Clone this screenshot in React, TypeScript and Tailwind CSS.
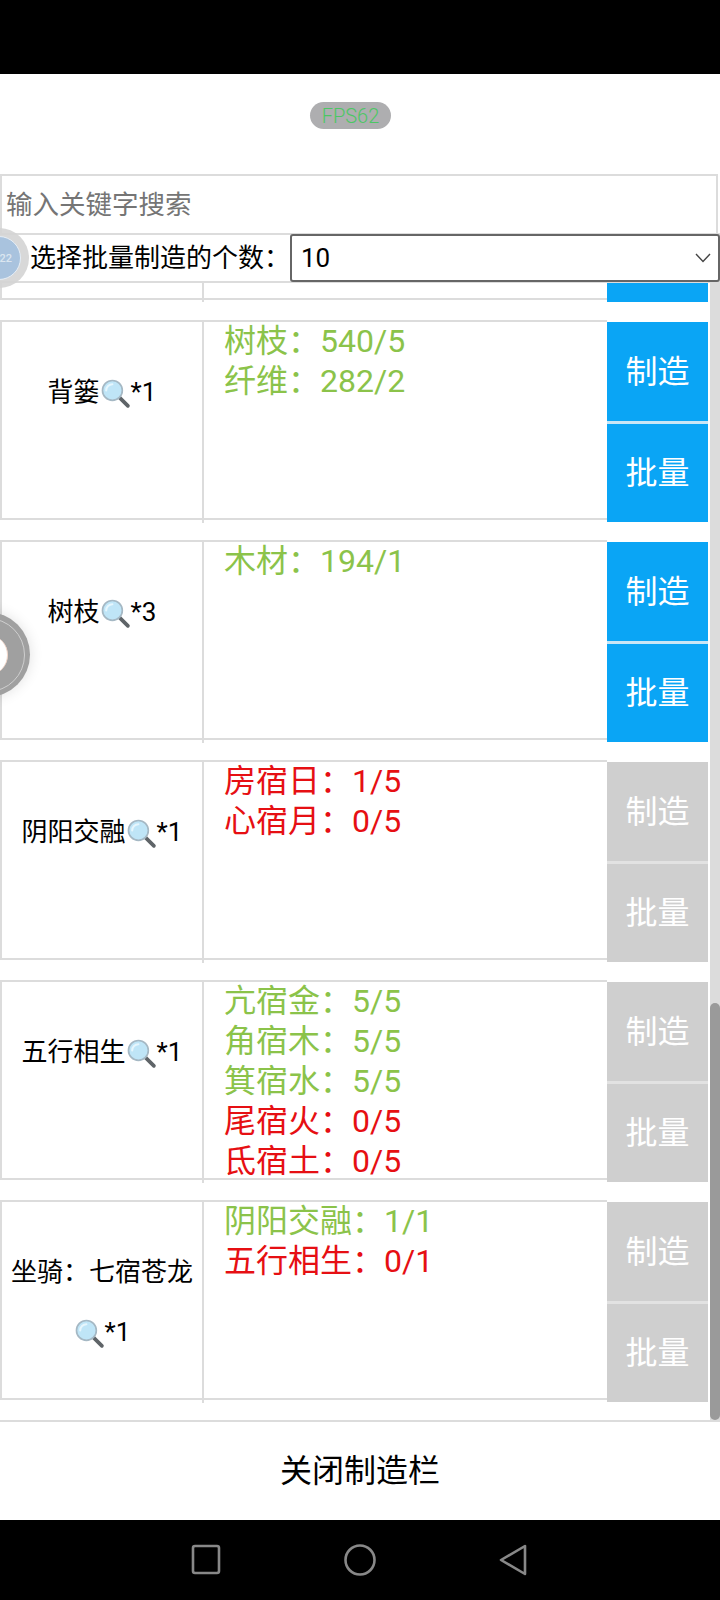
import React from "react";

type Need = { text: string; ok: boolean };

type Recipe = {
  name: string;
  suffix: string;
  needs: Need[];
  ready: boolean;
};

const recipes: Recipe[] = [
  {
    name: "背篓",
    suffix: "*1",
    ready: true,
    needs: [
      { text: "树枝：540/5", ok: true },
      { text: "纤维：282/2", ok: true },
    ],
  },
  {
    name: "树枝",
    suffix: "*3",
    ready: true,
    needs: [{ text: "木材：194/1", ok: true }],
  },
  {
    name: "阴阳交融",
    suffix: "*1",
    ready: false,
    needs: [
      { text: "房宿日：1/5", ok: false },
      { text: "心宿月：0/5", ok: false },
    ],
  },
  {
    name: "五行相生",
    suffix: "*1",
    ready: false,
    needs: [
      { text: "亢宿金：5/5", ok: true },
      { text: "角宿木：5/5", ok: true },
      { text: "箕宿水：5/5", ok: true },
      { text: "尾宿火：0/5", ok: false },
      { text: "氐宿土：0/5", ok: false },
    ],
  },
  {
    name: "坐骑：七宿苍龙",
    suffix: "*1",
    ready: false,
    needs: [
      { text: "阴阳交融：1/1", ok: true },
      { text: "五行相生：0/1", ok: false },
    ],
  },
];

function Magnifier() {
  return (
    <svg viewBox="0 0 30 30" className="inline-block w-[31px] h-[31px] align-[-8px]">
      <path d="M18 18 L27 27" stroke="#5f6468" strokeWidth="3.6" strokeLinecap="round" />
      <circle cx="12" cy="12" r="9.6" fill="#bfe5f7" stroke="#a5b8c4" strokeWidth="1.6" />
      <path d="M6 12 A6 6 0 0 1 12 6" stroke="#e6f6fd" strokeWidth="2" fill="none" strokeLinecap="round" />
    </svg>
  );
}

function RecipeRow({ recipe }: { recipe: Recipe }) {
  const btn = recipe.ready ? "bg-[#0aa5f5]" : "bg-[#cfcfcf]";
  const sep = recipe.ready ? "bg-[#c9e6f6]" : "bg-[#e2e2e2]";
  return (
    <div className="flex h-[203px] mb-[17px]">
      <div className="w-[204px] shrink-0 border-r-2 border-[#dcdcdc]">
        <div className="h-[200px] border-2 border-r-0 border-[#dcdcdc] pt-[40px] px-2 text-center text-[26px] leading-[60px] text-black">
          {recipe.name}
          <Magnifier />
          {recipe.suffix}
        </div>
      </div>
      <div className="flex-1 h-[200px] border-y-2 border-[#dcdcdc] pl-[20px] text-[32px] leading-[40px]">
        <div className="-mt-[1px]">
          {recipe.needs.map((n) => (
            <div key={n.text} className={n.ok ? "text-[#8bc34a]" : "text-[#e60f13]"}>
              {n.text}
            </div>
          ))}
        </div>
      </div>
      <div className="w-[101px] shrink-0 flex flex-col pt-[2px] text-[32px] text-white">
        <div className={`h-[99px] flex items-center justify-center ${btn}`}>制造</div>
        <div className={`h-[3px] ${sep}`} />
        <div className={`h-[98px] flex items-center justify-center ${btn}`}>批量</div>
      </div>
    </div>
  );
}

export default function App() {
  return (
    <div className="relative w-[720px] h-[1600px] overflow-hidden bg-white flex flex-col [font-family:Roboto,'Noto_Sans_CJK_SC',sans-serif]">
      <div className="h-[74px] shrink-0 bg-black" />

      {/* FPS pill */}
      <div className="h-[100px] shrink-0 pt-[28px] pl-[310px]">
        <div className="w-[81px] h-[27px] rounded-full bg-[#aeaeb0] flex items-center justify-center text-[20px] font-light leading-none text-[#4cc764]">
          FPS62
        </div>
      </div>

      {/* Search and batch count */}
      <div className="h-[59px] shrink-0 w-[718px] border-2 border-b-0 border-[#dcdcdc]">
        <input
          placeholder="输入关键字搜索"
          className="w-full h-full pl-[4px] text-[26.5px] outline-none placeholder:text-[#757575]"
        />
      </div>
      <div className="h-[50px] shrink-0 flex items-center border-y-2 border-[#dcdcdc] pl-[30px] text-[26px] text-black">
        <span className="w-[260px] shrink-0 whitespace-nowrap">选择批量制造的个数：</span>
        <div className="relative flex-1 h-[48px]">
          <select className="w-full h-full appearance-none bg-white border-2 border-[#666] rounded-[3px] pl-[9px] text-[26px] outline-none">
            <option>10</option>
          </select>
          <svg viewBox="0 0 16 10" className="absolute right-[9px] top-[19px] w-[16px] h-[10px]">
            <path d="M1 1 L8 8.5 L15 1" fill="none" stroke="#444" strokeWidth="1.4" />
          </svg>
        </div>
      </div>

      {/* List with scrollbar */}
      <div className="h-[1137px] shrink-0 flex overflow-hidden">
        <div className="w-[708px] shrink-0">
          <div className="flex h-[19px] mb-[18px]">
            <div className="w-[204px] shrink-0 border-r-2 border-[#dcdcdc]">
              <div className="h-[17px] border-2 border-t-0 border-r-0 border-[#dcdcdc]" />
            </div>
            <div className="flex-1 h-[17px] border-b-2 border-[#dcdcdc]" />
            <div className="w-[101px] shrink-0 bg-[#0aa5f5]" />
          </div>
          {recipes.map((r) => (
            <RecipeRow key={r.name} recipe={r} />
          ))}
        </div>
        <div className="w-[2px] shrink-0" />
        <div className="w-[10px] shrink-0 bg-[#dcdcdc] flex flex-col justify-end">
          <div className="h-[417px] rounded-full bg-[#9a9a9a]" />
        </div>
      </div>

      {/* Close bar */}
      <div className="h-[100px] shrink-0 border-t-2 border-[#dcdcdc] flex items-center justify-center text-[32px] text-black">
        关闭制造栏
      </div>

      {/* Android nav bar */}
      <div className="h-[80px] shrink-0 bg-black flex items-center">
        <svg viewBox="0 0 720 80" className="w-[720px] h-[80px]">
          <rect x="193" y="26" width="26" height="27" rx="2" fill="none" stroke="#888" strokeWidth="2.6" />
          <ellipse cx="360" cy="40" rx="14.5" ry="14.5" fill="none" stroke="#888" strokeWidth="2.6" />
          <path d="M525 26 L525 54 L501 40 Z" fill="none" stroke="#888" strokeWidth="2.6" strokeLinejoin="round" />
        </svg>
      </div>

      {/* Floating balls */}
      <div className="absolute left-[-31px] top-[228px] w-[60px] h-[60px] rounded-full bg-[#d4d4d4]/90 flex items-center justify-center">
        <div className="w-[44px] h-[44px] rounded-full bg-[#a9c3de] border border-[#e6eef6] flex items-center justify-end pr-[8px] text-[11px] font-medium leading-none text-[#dbe6f0]">
          22
        </div>
      </div>
      <div className="absolute left-[-55px] top-[612px] w-[85px] h-[85px] rounded-full bg-[#a0a0a0] shadow-[0_0_14px_rgba(0,0,0,0.12)] flex items-center justify-center">
        <div className="w-[74px] h-[74px] rounded-full border border-[#cfcfcf] flex items-center justify-center">
          <div className="w-[40px] h-[40px] rounded-full bg-white border-r border-[#f3d6c8]" />
        </div>
      </div>
    </div>
  );
}
